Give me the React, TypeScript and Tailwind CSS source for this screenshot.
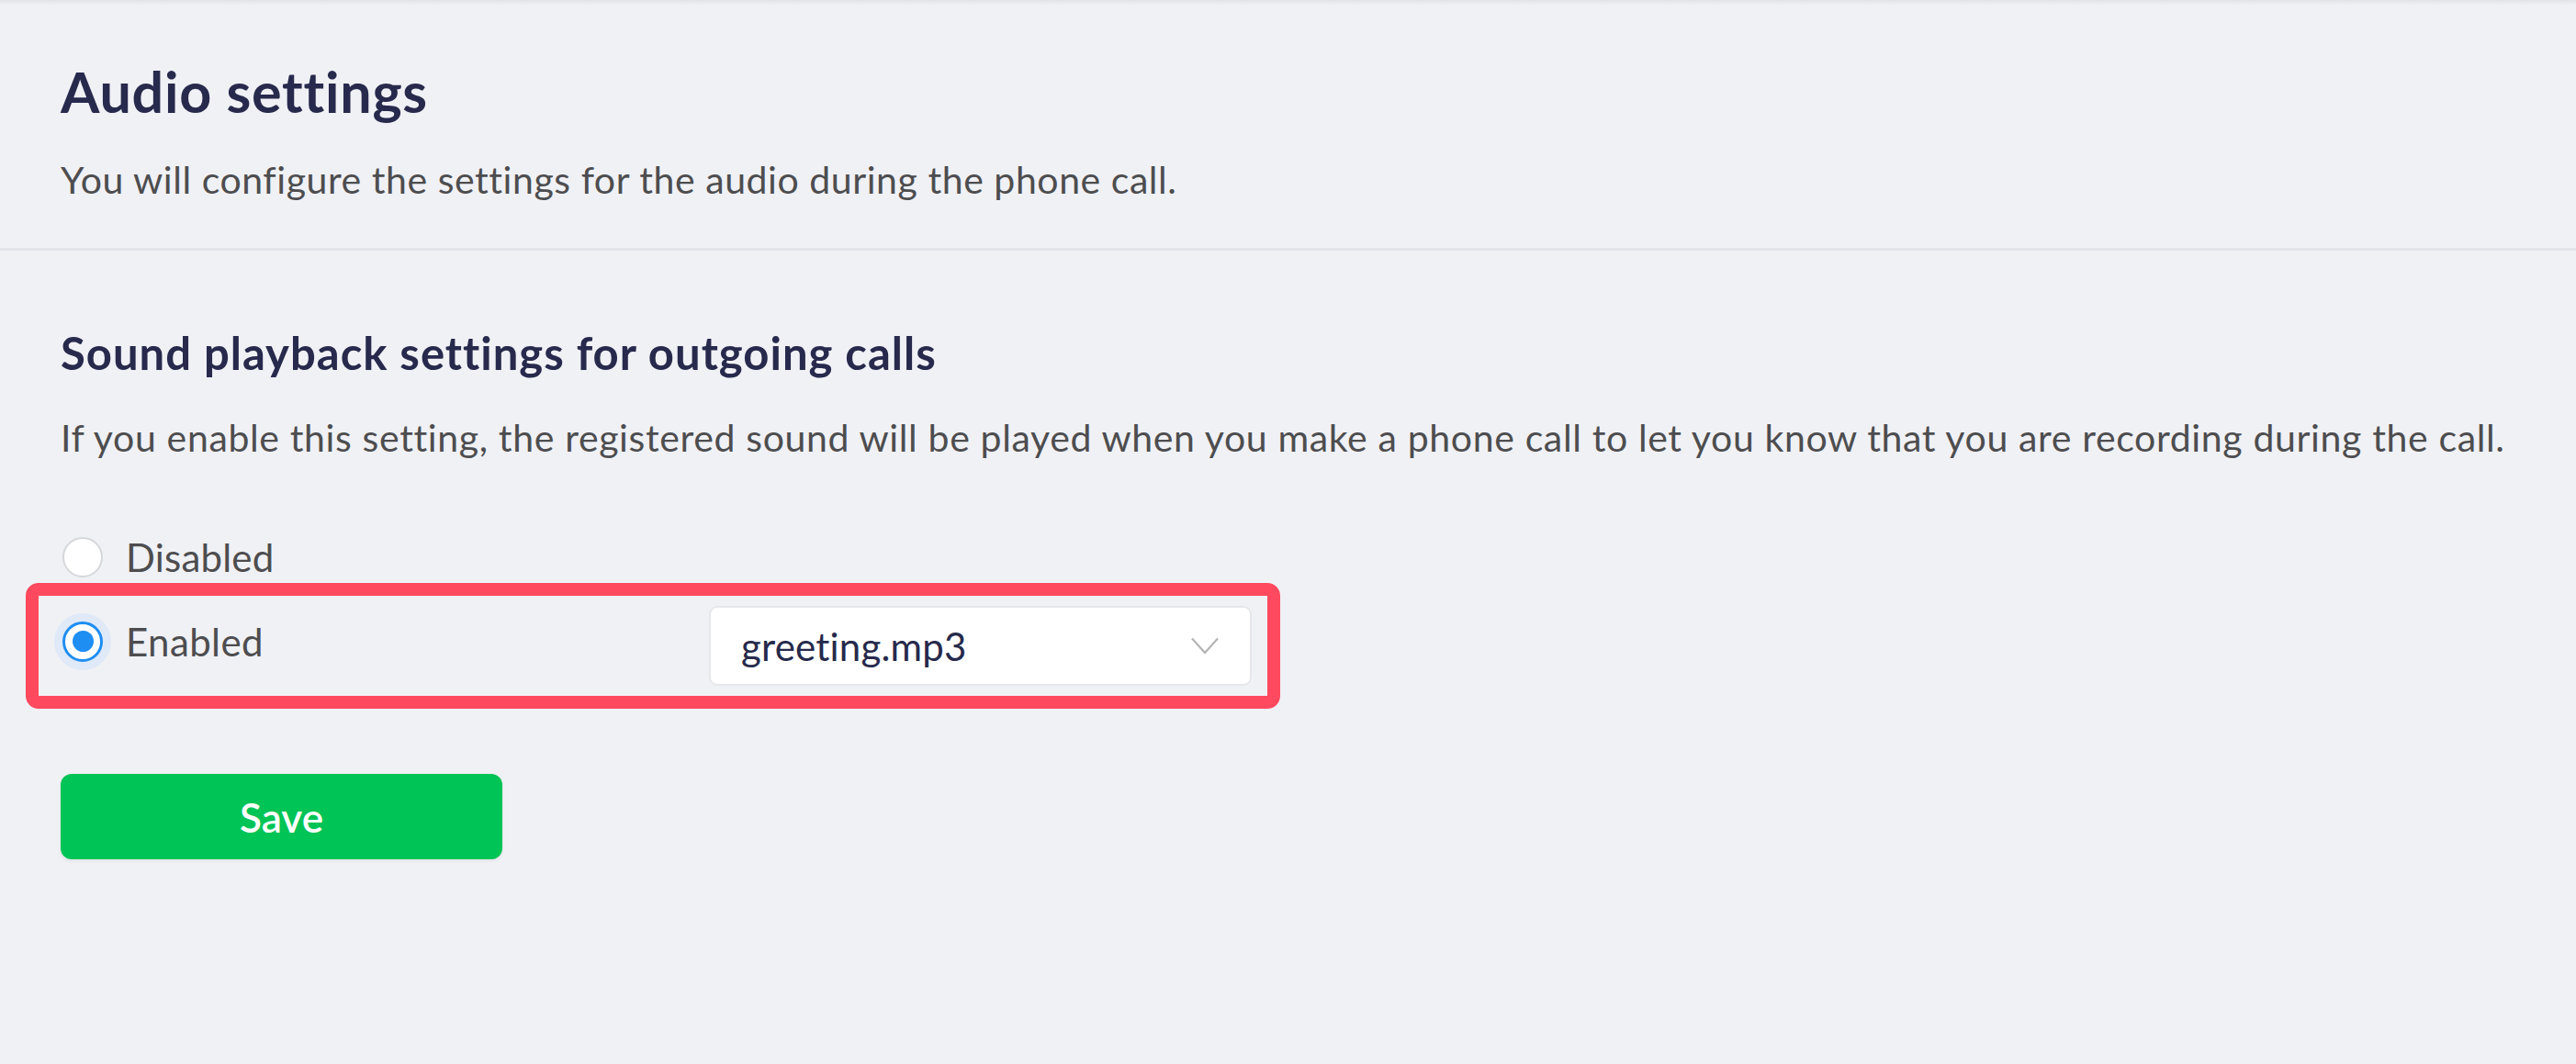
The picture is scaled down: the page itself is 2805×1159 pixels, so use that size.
import { useState } from "react";

const options = [
  { id: "disabled", label: "Disabled" },
  { id: "enabled", label: "Enabled" },
];

function Radio({ checked }: { checked: boolean }) {
  if (!checked) {
    return (
      <span className="w-[44px] h-[44px] rounded-full border-2 border-[#d6d7da] bg-white shrink-0" />
    );
  }
  return (
    <span className="w-[44px] h-[44px] rounded-full flex items-center justify-center shrink-0 ring-[9px] ring-[#dfe9f7] bg-white border-[3px] border-[#1e8ef3]">
      <span className="w-[23px] h-[23px] rounded-full bg-[#1e8ef3]" />
    </span>
  );
}

export default function App() {
  const [value, setValue] = useState("enabled");

  return (
    <div
      className="min-h-screen bg-[#f0f1f5] text-[#4d4d4f]"
      style={{ fontFamily: "Lato, 'Noto Sans', sans-serif" }}
    >
      <div className="h-[6px] bg-linear-to-b from-[#e3e4e8] to-[#f0f1f5]" />

      {/* Page header */}
      <header className="px-[66px] pt-[58px] pb-[50px] border-b-[3px] border-[#e4e5ea]">
        <h1 className="text-[61px] leading-[72px] tracking-[0.75px] font-bold text-[#272a4c]">
          Audio settings
        </h1>
        <p className="mt-[36px] text-[41px] leading-[48px] tracking-[0.55px]">
          You will configure the settings for the audio during the phone call.
        </p>
      </header>

      {/* Outgoing call sound */}
      <section className="px-[66px] pt-[82px]">
        <h2 className="text-[49px] leading-[58px] tracking-[1px] font-bold text-[#272a4c]">
          Sound playback settings for outgoing calls
        </h2>
        <p className="mt-[40px] text-[41px] leading-[48px] tracking-[0.64px]">
          If you enable this setting, the registered sound will be played when
          you make a phone call to let you know that you are recording during
          the call.
        </p>

        <div className="mt-[84px] ml-[2px] flex flex-col gap-[6px]">
          <button
            onClick={() => setValue(options[0].id)}
            className="h-[44px] flex items-center gap-[25px] text-left"
          >
            <Radio checked={value === "disabled"} />
            <span className="text-[42px] leading-[50px] tracking-[0.2px]">
              {options[0].label}
            </span>
          </button>

          <div className="-ml-[40px] w-[1366px] border-[14px] border-[#ff495e] rounded-[14px] pl-[26px] pr-[17px] py-[11px] flex items-center">
            <button
              onClick={() => setValue(options[1].id)}
              className="w-[704px] mb-[10px] flex items-center gap-[25px] text-left"
            >
              <Radio checked={value === "enabled"} />
              <span className="text-[42px] leading-[50px] tracking-[0.4px]">
                {options[1].label}
              </span>
            </button>
            <div className="w-[591px] h-[87px] bg-white rounded-[9px] border-2 border-[#e6e7eb] pl-[33px] pr-[34px] flex items-center justify-between">
              <span className="text-[42px] leading-[50px] tracking-[0.2px] text-[#262a4b]">
                greeting.mp3
              </span>
              <svg
                width="30"
                height="19"
                viewBox="0 0 30 19"
                fill="none"
                stroke="#b5b5b7"
                strokeWidth="2.2"
              >
                <path d="M1 1.5 L15 17 L29 1.5" />
              </svg>
            </div>
          </div>
        </div>

        <button className="mt-[71px] w-[481px] h-[93px] rounded-[12px] bg-[#00c455] text-white text-[44px] font-semibold shadow-[0_2px_4px_rgba(0,0,0,0.06)]">
          Save
        </button>
      </section>
    </div>
  );
}
